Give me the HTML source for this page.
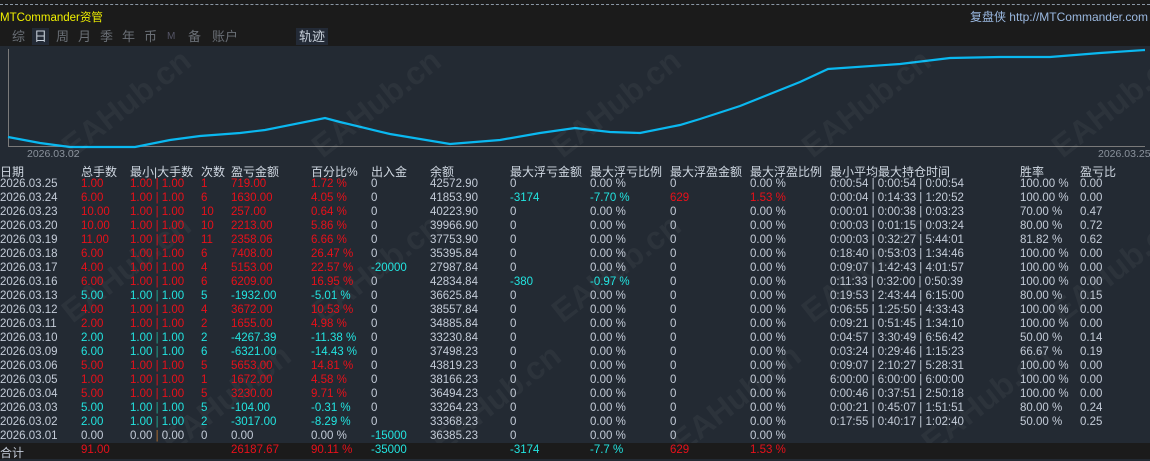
<!DOCTYPE html>
<html><head><meta charset="utf-8"><style>
*{margin:0;padding:0;box-sizing:border-box}
body{width:1150px;height:458px;overflow:hidden;background:#232a33;font-family:"Liberation Sans","Noto Sans CJK SC",sans-serif;font-size:11.5px;color:#c4ccd8;position:relative}
.top{position:absolute;left:0;top:0;width:1150px;height:46px;background:#1b1b1b}
.dash{position:absolute;left:0;top:4px;width:1150px;border-top:1px dashed #8a96a4}
.title{position:absolute;left:0;top:9px;color:#f0f000;font-size:11.5px}
.site{position:absolute;right:2px;top:8px;color:#9ab8e0;font-size:12px}
.tab{position:absolute;top:28px;font-size:13px;color:#6a6f76;line-height:17px}
.sel{background:#232a36;color:#c8d0da;padding:0 2px}
.chart{position:absolute;left:0;top:46px}
.r0{position:absolute;left:0;width:1150px;height:14px}
.r0 span{position:absolute;top:0;white-space:nowrap}
.red{color:#e8101a}.cy{color:#22e4e0}.w{color:#c4ccd8}.g{color:#23a890}
.c1{left:0}.c2{left:81px}.c3{left:130px}.c4{left:201px}.c5{left:231px}.c6{left:311px}.c7{left:371px}.c8{left:430px}.c9{left:510px}.c10{left:590px}.c11{left:670px}.c12{left:750px}.c13{left:830px}.c14{left:1020px}.c15{left:1080px}
.hd span{font-size:12px;color:#d0d8e2}
.tot{background:#1b1b1b;height:16px}
.wm{position:absolute;font-size:32px;font-weight:bold;color:rgba(255,255,255,0.045);transform:rotate(-38deg);white-space:nowrap}
</style></head><body>
<div class="top"><div class="dash"></div>
<div class="title">MTCommander资管</div>
<div class="site">复盘侠 http://MTCommander.com</div>
<div class="tab" style="left:12px">综</div>
<div class="tab sel" style="left:32px">日</div>
<div class="tab" style="left:56px">周</div>
<div class="tab" style="left:78px">月</div>
<div class="tab" style="left:100px">季</div>
<div class="tab" style="left:122px">年</div>
<div class="tab" style="left:144px">币</div>
<div class="tab" style="left:167px;font-size:10px;color:#556">M</div>
<div class="tab" style="left:188px">备</div>
<div class="tab" style="left:212px">账户</div>
<div class="tab sel" style="left:296px;padding:0 3px">轨迹</div>
</div>
<svg class="chart" width="1150" height="114">
<line x1="8.5" y1="3" x2="8.5" y2="100" stroke="#7a7a7a"/>
<line x1="8" y1="100.5" x2="1145" y2="100.5" stroke="#7a7a7a"/>
<polyline fill="none" stroke="#0ab8f0" stroke-width="2.2" points="8,91 40,97 70,101 135,101 170,94 200,90 240,87 265,84 325,72 340,76 390,88 450,98 500,94 540,87 575,82 610,86 640,87 680,79 700,73 740,60 765,50 800,36 828,23 900,18 950,12 1000,11 1050,11 1100,7 1145,4"/>
<text x="27" y="111" fill="#8a929c" font-size="10.5" font-family="Liberation Sans">2026.03.02</text>
<text x="1098" y="111" fill="#8a929c" font-size="10.5" font-family="Liberation Sans">2026.03.25</text>
</svg>
<div class="wm" style="left:50px;top:85px">EAHub.cn</div>
<div class="wm" style="left:300px;top:85px">EAHub.cn</div>
<div class="wm" style="left:540px;top:85px">EAHub.cn</div>
<div class="wm" style="left:790px;top:85px">EAHub.cn</div>
<div class="wm" style="left:1040px;top:85px">EAHub.cn</div>
<div class="wm" style="left:50px;top:250px">EAHub.cn</div>
<div class="wm" style="left:300px;top:250px">EAHub.cn</div>
<div class="wm" style="left:540px;top:250px">EAHub.cn</div>
<div class="wm" style="left:790px;top:250px">EAHub.cn</div>
<div class="wm" style="left:1040px;top:250px">EAHub.cn</div>
<div class="wm" style="left:150px;top:380px">EAHub.cn</div>
<div class="wm" style="left:420px;top:380px">EAHub.cn</div>
<div class="wm" style="left:660px;top:380px">EAHub.cn</div>
<div class="wm" style="left:910px;top:380px">EAHub.cn</div>

<div class="r0 hd" style="top:163px"><span class="c1">日期</span><span class="c2">总手数</span><span class="c3">最小|大手数</span><span class="c4">次数</span><span class="c5">盈亏金额</span><span class="c6">百分比%</span><span class="c7">出入金</span><span class="c8">余额</span><span class="c9">最大浮亏金额</span><span class="c10">最大浮亏比例</span><span class="c11">最大浮盈金额</span><span class="c12">最大浮盈比例</span><span class="c13">最小平均最大持仓时间</span><span class="c14">胜率</span><span class="c15">盈亏比</span></div>

<div class="r0" style="top:178px"><span class="c1">2026.03.25</span><span class="c2 red">1.00</span><span class="c3 red">1.00 | 1.00</span><span class="c4 red">1</span><span class="c5 red">719.00</span><span class="c6 red">1.72 %</span><span class="c7">0</span><span class="c8">42572.90</span><span class="c9">0</span><span class="c10">0.00 %</span><span class="c11">0</span><span class="c12">0.00 %</span><span class="c13">0:00:54 | 0:00:54 | 0:00:54</span><span class="c14">100.00 %</span><span class="c15">0.00</span></div>
<div class="r0" style="top:192px"><span class="c1">2026.03.24</span><span class="c2 red">6.00</span><span class="c3 red">1.00 | 1.00</span><span class="c4 red">6</span><span class="c5 red">1630.00</span><span class="c6 red">4.05 %</span><span class="c7">0</span><span class="c8">41853.90</span><span class="c9 cy">-3174</span><span class="c10 cy">-7.70 %</span><span class="c11 red">629</span><span class="c12 red">1.53 %</span><span class="c13">0:00:04 | 0:14:33 | 1:20:52</span><span class="c14">100.00 %</span><span class="c15">0.00</span></div>
<div class="r0" style="top:206px"><span class="c1">2026.03.23</span><span class="c2 red">10.00</span><span class="c3 red">1.00 | 1.00</span><span class="c4 red">10</span><span class="c5 red">257.00</span><span class="c6 red">0.64 %</span><span class="c7">0</span><span class="c8">40223.90</span><span class="c9">0</span><span class="c10">0.00 %</span><span class="c11">0</span><span class="c12">0.00 %</span><span class="c13">0:00:01 | 0:00:38 | 0:03:23</span><span class="c14">70.00 %</span><span class="c15">0.47</span></div>
<div class="r0" style="top:220px"><span class="c1">2026.03.20</span><span class="c2 red">10.00</span><span class="c3 red">1.00 | 1.00</span><span class="c4 red">10</span><span class="c5 red">2213.00</span><span class="c6 red">5.86 %</span><span class="c7">0</span><span class="c8">39966.90</span><span class="c9">0</span><span class="c10">0.00 %</span><span class="c11">0</span><span class="c12">0.00 %</span><span class="c13">0:00:03 | 0:01:15 | 0:03:24</span><span class="c14">80.00 %</span><span class="c15">0.72</span></div>
<div class="r0" style="top:234px"><span class="c1">2026.03.19</span><span class="c2 red">11.00</span><span class="c3 red">1.00 | 1.00</span><span class="c4 red">11</span><span class="c5 red">2358.06</span><span class="c6 red">6.66 %</span><span class="c7">0</span><span class="c8">37753.90</span><span class="c9">0</span><span class="c10">0.00 %</span><span class="c11">0</span><span class="c12">0.00 %</span><span class="c13">0:00:03 | 0:32:27 | 5:44:01</span><span class="c14">81.82 %</span><span class="c15">0.62</span></div>
<div class="r0" style="top:248px"><span class="c1">2026.03.18</span><span class="c2 red">6.00</span><span class="c3 red">1.00 | 1.00</span><span class="c4 red">6</span><span class="c5 red">7408.00</span><span class="c6 red">26.47 %</span><span class="c7">0</span><span class="c8">35395.84</span><span class="c9">0</span><span class="c10">0.00 %</span><span class="c11">0</span><span class="c12">0.00 %</span><span class="c13">0:18:40 | 0:53:03 | 1:34:46</span><span class="c14">100.00 %</span><span class="c15">0.00</span></div>
<div class="r0" style="top:262px"><span class="c1">2026.03.17</span><span class="c2 red">4.00</span><span class="c3 red">1.00 | 1.00</span><span class="c4 red">4</span><span class="c5 red">5153.00</span><span class="c6 red">22.57 %</span><span class="c7 cy">-20000</span><span class="c8">27987.84</span><span class="c9">0</span><span class="c10">0.00 %</span><span class="c11">0</span><span class="c12">0.00 %</span><span class="c13">0:09:07 | 1:42:43 | 4:01:57</span><span class="c14">100.00 %</span><span class="c15">0.00</span></div>
<div class="r0" style="top:276px"><span class="c1">2026.03.16</span><span class="c2 red">6.00</span><span class="c3 red">1.00 | 1.00</span><span class="c4 red">6</span><span class="c5 red">6209.00</span><span class="c6 red">16.95 %</span><span class="c7">0</span><span class="c8">42834.84</span><span class="c9 cy">-380</span><span class="c10 cy">-0.97 %</span><span class="c11">0</span><span class="c12">0.00 %</span><span class="c13">0:11:33 | 0:32:00 | 0:50:39</span><span class="c14">100.00 %</span><span class="c15">0.00</span></div>
<div class="r0" style="top:290px"><span class="c1">2026.03.13</span><span class="c2 cy">5.00</span><span class="c3 cy">1.00 <b class="g" style="font-weight:normal">|</b> 1.00</span><span class="c4 cy">5</span><span class="c5 cy">-1932.00</span><span class="c6 cy">-5.01 %</span><span class="c7">0</span><span class="c8">36625.84</span><span class="c9">0</span><span class="c10">0.00 %</span><span class="c11">0</span><span class="c12">0.00 %</span><span class="c13">0:19:53 | 2:43:44 | 6:15:00</span><span class="c14">80.00 %</span><span class="c15">0.15</span></div>
<div class="r0" style="top:304px"><span class="c1">2026.03.12</span><span class="c2 red">4.00</span><span class="c3 red">1.00 | 1.00</span><span class="c4 red">4</span><span class="c5 red">3672.00</span><span class="c6 red">10.53 %</span><span class="c7">0</span><span class="c8">38557.84</span><span class="c9">0</span><span class="c10">0.00 %</span><span class="c11">0</span><span class="c12">0.00 %</span><span class="c13">0:06:55 | 1:25:50 | 4:33:43</span><span class="c14">100.00 %</span><span class="c15">0.00</span></div>
<div class="r0" style="top:318px"><span class="c1">2026.03.11</span><span class="c2 red">2.00</span><span class="c3 red">1.00 | 1.00</span><span class="c4 red">2</span><span class="c5 red">1655.00</span><span class="c6 red">4.98 %</span><span class="c7">0</span><span class="c8">34885.84</span><span class="c9">0</span><span class="c10">0.00 %</span><span class="c11">0</span><span class="c12">0.00 %</span><span class="c13">0:09:21 | 0:51:45 | 1:34:10</span><span class="c14">100.00 %</span><span class="c15">0.00</span></div>
<div class="r0" style="top:332px"><span class="c1">2026.03.10</span><span class="c2 cy">2.00</span><span class="c3 cy">1.00 <b class="g" style="font-weight:normal">|</b> 1.00</span><span class="c4 cy">2</span><span class="c5 cy">-4267.39</span><span class="c6 cy">-11.38 %</span><span class="c7">0</span><span class="c8">33230.84</span><span class="c9">0</span><span class="c10">0.00 %</span><span class="c11">0</span><span class="c12">0.00 %</span><span class="c13">0:04:57 | 3:30:49 | 6:56:42</span><span class="c14">50.00 %</span><span class="c15">0.14</span></div>
<div class="r0" style="top:346px"><span class="c1">2026.03.09</span><span class="c2 cy">6.00</span><span class="c3 cy">1.00 <b class="g" style="font-weight:normal">|</b> 1.00</span><span class="c4 cy">6</span><span class="c5 cy">-6321.00</span><span class="c6 cy">-14.43 %</span><span class="c7">0</span><span class="c8">37498.23</span><span class="c9">0</span><span class="c10">0.00 %</span><span class="c11">0</span><span class="c12">0.00 %</span><span class="c13">0:03:24 | 0:29:46 | 1:15:23</span><span class="c14">66.67 %</span><span class="c15">0.19</span></div>
<div class="r0" style="top:360px"><span class="c1">2026.03.06</span><span class="c2 red">5.00</span><span class="c3 red">1.00 | 1.00</span><span class="c4 red">5</span><span class="c5 red">5653.00</span><span class="c6 red">14.81 %</span><span class="c7">0</span><span class="c8">43819.23</span><span class="c9">0</span><span class="c10">0.00 %</span><span class="c11">0</span><span class="c12">0.00 %</span><span class="c13">0:09:07 | 2:10:27 | 5:28:31</span><span class="c14">100.00 %</span><span class="c15">0.00</span></div>
<div class="r0" style="top:374px"><span class="c1">2026.03.05</span><span class="c2 red">1.00</span><span class="c3 red">1.00 | 1.00</span><span class="c4 red">1</span><span class="c5 red">1672.00</span><span class="c6 red">4.58 %</span><span class="c7">0</span><span class="c8">38166.23</span><span class="c9">0</span><span class="c10">0.00 %</span><span class="c11">0</span><span class="c12">0.00 %</span><span class="c13">6:00:00 | 6:00:00 | 6:00:00</span><span class="c14">100.00 %</span><span class="c15">0.00</span></div>
<div class="r0" style="top:388px"><span class="c1">2026.03.04</span><span class="c2 red">5.00</span><span class="c3 red">1.00 | 1.00</span><span class="c4 red">5</span><span class="c5 red">3230.00</span><span class="c6 red">9.71 %</span><span class="c7">0</span><span class="c8">36494.23</span><span class="c9">0</span><span class="c10">0.00 %</span><span class="c11">0</span><span class="c12">0.00 %</span><span class="c13">0:00:46 | 0:37:51 | 2:50:18</span><span class="c14">100.00 %</span><span class="c15">0.00</span></div>
<div class="r0" style="top:402px"><span class="c1">2026.03.03</span><span class="c2 cy">5.00</span><span class="c3 cy">1.00 <b class="g" style="font-weight:normal">|</b> 1.00</span><span class="c4 cy">5</span><span class="c5 cy">-104.00</span><span class="c6 cy">-0.31 %</span><span class="c7">0</span><span class="c8">33264.23</span><span class="c9">0</span><span class="c10">0.00 %</span><span class="c11">0</span><span class="c12">0.00 %</span><span class="c13">0:00:21 | 0:45:07 | 1:51:51</span><span class="c14">80.00 %</span><span class="c15">0.24</span></div>
<div class="r0" style="top:416px"><span class="c1">2026.03.02</span><span class="c2 cy">2.00</span><span class="c3 cy">1.00 <b class="g" style="font-weight:normal">|</b> 1.00</span><span class="c4 cy">2</span><span class="c5 cy">-3017.00</span><span class="c6 cy">-8.29 %</span><span class="c7">0</span><span class="c8">33368.23</span><span class="c9">0</span><span class="c10">0.00 %</span><span class="c11">0</span><span class="c12">0.00 %</span><span class="c13">0:17:55 | 0:40:17 | 1:02:40</span><span class="c14">50.00 %</span><span class="c15">0.25</span></div>
<div class="r0" style="top:430px"><span class="c1">2026.03.01</span><span class="c2">0.00</span><span class="c3">0.00 <b style="font-weight:normal;color:#b07030">|</b> 0.00</span><span class="c4">0</span><span class="c5">0.00</span><span class="c6">0.00 %</span><span class="c7 cy">-15000</span><span class="c8">36385.23</span><span class="c9">0</span><span class="c10">0.00 %</span><span class="c11">0</span><span class="c12">0.00 %</span></div>
<div class="r0 tot" style="top:443px"><span class="c1" style="top:1px;font-size:12px">合计</span><span class="c2 red" style="top:1px">91.00</span><span class="c5 red" style="top:1px">26187.67</span><span class="c6 red" style="top:1px">90.11 %</span><span class="c7 cy" style="top:1px">-35000</span><span class="c9 cy" style="top:1px">-3174</span><span class="c10 cy" style="top:1px">-7.7 %</span><span class="c11 red" style="top:1px">629</span><span class="c12 red" style="top:1px">1.53 %</span></div>
</body></html>
